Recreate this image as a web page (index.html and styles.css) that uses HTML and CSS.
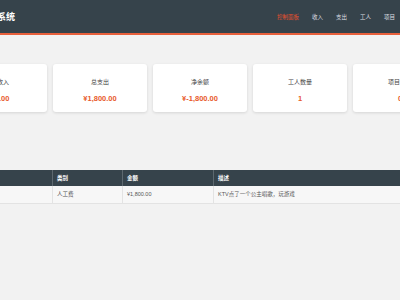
FILE: index.html
```html
<!DOCTYPE html>
<html lang="zh-CN">
<head>
  <meta charset="UTF-8" />
  <title>财务管理系统</title>
  <link rel="stylesheet" href="styles.css">
</head>
<body>

  <div class="header">
    <h1 class="logo">财务管理系统</h1>
    <div class="nav">
      <a class="active" href="#">控制面板</a>
      <a href="#">收入</a>
      <a href="#">支出</a>
      <a href="#">工人</a>
      <a href="#">项目</a>
    </div>
  </div>

  <div class="main">
    <div class="stats">
      <div class="card">
        <p class="label">总收入</p>
        <p class="value">¥0.00</p>
      </div>
      <div class="card">
        <p class="label">总支出</p>
        <p class="value">¥1,800.00</p>
      </div>
      <div class="card">
        <p class="label">净余额</p>
        <p class="value">¥-1,800.00</p>
      </div>
      <div class="card">
        <p class="label">工人数量</p>
        <p class="value">1</p>
      </div>
      <div class="card">
        <p class="label">项目数量</p>
        <p class="value">0</p>
      </div>
    </div>

    <table class="records">
      <thead>
        <tr>
          <th class="c-date">日期</th>
          <th class="c-type">类别</th>
          <th class="c-amount">金额</th>
          <th>描述</th>
        </tr>
      </thead>
      <tbody>
        <tr>
          <td>2024-05-01</td>
          <td>人工费</td>
          <td>¥1,800.00</td>
          <td>KTV点了一个公主唱歌，玩游戏</td>
        </tr>
      </tbody>
    </table>
  </div>

</body>
</html>
```

FILE: styles.css
```css
* {
  margin: 0;
  padding: 0;
  box-sizing: border-box;
}

body {
  background-color: #f2f2f2;
  font-family: "Liberation Sans", "Noto Sans CJK SC", sans-serif;
  overflow-x: hidden;
}

.header {
  height: 35px;
  background-color: #36434b;
  border-bottom: 2px solid #e8603c;
  display: flex;
  align-items: center;
  justify-content: space-between;
  padding-right: 5px;
  overflow: hidden;
}

.logo {
  margin-left: -39px;
  font-size: 9px;
  font-weight: bold;
  color: white;
  white-space: nowrap;
}

.nav {
  display: flex;
  gap: 13px;
}

.nav a {
  font-size: 5.5px;
  color: #dcdfe1;
  text-decoration: none;
}

.nav a.active {
  color: #e8502c;
}

.main {
  width: 494px;
  margin-left: -47px;
  padding-top: 29px;
}

.stats {
  display: grid;
  grid-template-columns: repeat(5, 94px);
  gap: 6px;
}

.card {
  height: 48px;
  background-color: white;
  border-radius: 3px;
  box-shadow: 0 1px 3px rgba(0, 0, 0, 0.12);
  display: flex;
  flex-direction: column;
  align-items: center;
  padding-top: 14px;
  gap: 8px;
}

.card .label {
  font-size: 6px;
  color: #444;
  line-height: 8px;
}

.card .value {
  font-size: 7.5px;
  font-weight: bold;
  color: #e85a2c;
  line-height: 9px;
}

.records {
  margin-top: 58px;
  width: 494px;
  border-collapse: collapse;
  font-size: 5.5px;
}

.records th {
  height: 16px;
  background-color: #36434b;
  color: white;
  font-weight: bold;
  text-align: left;
  padding: 0 4px;
  border-left: 1px solid #5d686f;
}

.records td {
  height: 17px;
  background-color: #f7f7f7;
  color: #555;
  padding: 0 4px;
  border-left: 1px solid #e3e3e3;
  border-bottom: 1px solid #e3e3e3;
}

.records .c-date {
  width: 99px;
}

.records .c-type {
  width: 70px;
}

.records .c-amount {
  width: 91px;
}
```
